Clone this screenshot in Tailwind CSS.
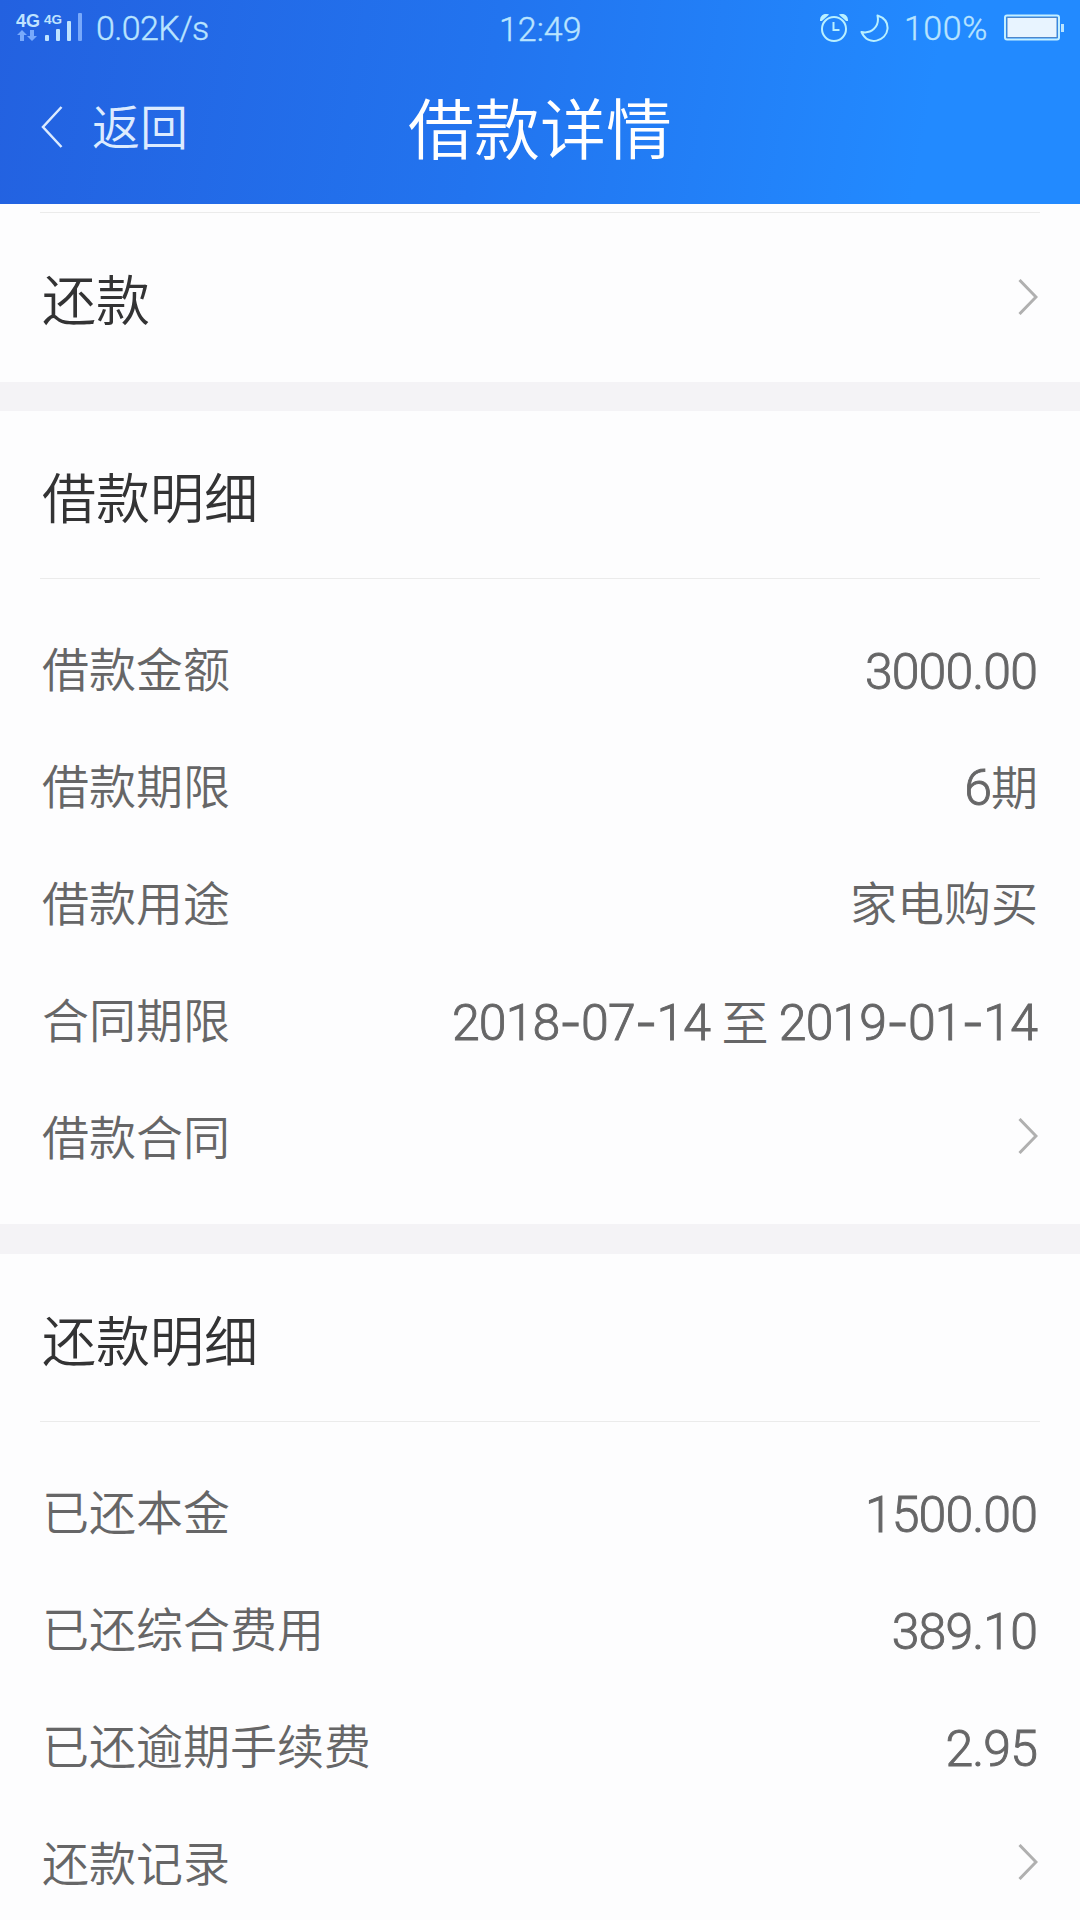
<!DOCTYPE html>
<html lang="zh-CN">
<head>
  <meta charset="UTF-8" />
  <meta name="viewport" content="width=device-width, initial-scale=1.0" />
  <title>借款详情</title>
  <script src="https://cdn.jsdelivr.net/npm/@tailwindcss/browser@4"></script>
</head>
<body class="w-[1080px] h-[1920px] overflow-hidden bg-[#fdfdfe] font-[Roboto,'Noto_Sans_CJK_SC',sans-serif] font-[350] text-[#666667]">

  <!-- Header -->
  <header class="h-[204px] bg-linear-100 from-[#2361e0] via-[#2274ef] via-45% to-[#228aff] to-85%">
    <!-- Status bar -->
    <div class="relative flex h-14 items-center justify-between pl-4 pr-[15px] text-[#b9e4ff] [-webkit-text-stroke:0.4px_currentColor]">
      <div class="flex items-center">
        <svg class="w-[68px] h-8" viewBox="0 0 68 32" fill="#bfe3ff">
          <text x="0" y="15" font-family="Liberation Sans" font-weight="700" font-size="18">4G</text>
          <text x="28" y="12" font-family="Liberation Sans" font-weight="700" font-size="13.5">4G</text>
          <g fill="#78a9fb">
            <path d="M6 18l5 5H8v6H4v-6H1z" />
            <path d="M16 29l5-5h-3v-6h-4v6h-3z" />
            <rect x="62" y="1" width="4" height="28" rx="1" />
          </g>
          <rect x="29" y="23" width="4" height="6" rx="1" />
          <rect x="40" y="17" width="4" height="12" rx="1" />
          <rect x="51" y="9" width="4" height="20" rx="1" />
        </svg>
        <span class="ml-3 text-[34px] leading-14 tracking-[-0.6px]">0.02K/s</span>
      </div>
      <span class="absolute left-[499px] top-px text-[34px] leading-14">12:49</span>
      <div class="flex items-center">
        <svg class="w-7 h-7" viewBox="0 0 28 28" fill="none" stroke="#b9f0ff" stroke-width="2">
          <circle cx="14" cy="15" r="12" />
          <path d="M13.500 8v8h6" />
          <path d="M1 6a5 5 0 0 1 6-5L1.500 6zM27 6a5 5 0 0 0-6-5l5.500 5z" fill="#b9f0ff" />
        </svg>
        <svg class="ml-3 w-[29px] h-[29px]" viewBox="0 0 29 29" fill="none" stroke="#b9f0ff" stroke-width="2" stroke-linejoin="round">
          <path d="M17.500 1.500C25 4 28 9 27.500 15 26.500 27 8 33 1.500 18 11 20 20 13 17.500 1.500z" />
        </svg>
        <span class="ml-[15px] text-[34px] leading-14 tracking-[0.6px]">100%</span>
        <svg class="ml-4 w-[61px] h-7" viewBox="0 0 61 28" fill="none">
          <rect x="1" y="1.500" width="54" height="24" rx="2" stroke="#c5efff" stroke-width="2" />
          <rect x="3" y="3.500" width="50" height="20" fill="#e8f4ff" stroke="#4d86c8" />
          <rect x="57" y="10" width="3" height="8" fill="#b9e4ff" />
        </svg>
      </div>
    </div>

    <!-- Nav bar -->
    <div class="relative flex h-[148px] items-start justify-center">
      <a href="#" class="absolute left-[41px] top-[35px] flex items-center gap-[29px] text-[48px] leading-[68px] text-[#dcebff]">
        <svg class="w-[22px] h-[42px]" viewBox="0 0 22 42" fill="none" stroke="currentColor" stroke-width="2.500">
          <path d="M20.500 1L2 21l18.500 20" />
        </svg>
        <span class="pt-1">返回</span>
      </a>
      <h1 class="mt-[26px] text-[66px] leading-[100px] text-white">借款详情</h1>
    </div>
  </header>

  <main>
    <!-- Repay entry -->
    <section class="h-[178px] px-10 pt-2">
      <div class="border-t border-[#ebebeb]"></div>
      <a href="#" class="flex h-[168px] items-center justify-between px-0.5">
        <span class="pt-[11px] text-[54px] leading-[80px] text-[#333334]">还款</span>
        <svg class="w-5 h-9" viewBox="0 0 20 36" fill="none" stroke="#b0b0b0" stroke-width="3"><path d="M1.500 1L18 18 1.500 35" /></svg>
      </a>
    </section>

    <div class="h-[29px] bg-[#f4f3f6]"></div>

    <!-- Loan details -->
    <section class="px-10">
      <h2 class="flex h-[168px] items-center border-b border-[#ebebeb] px-0.5 pt-3 text-[54px] text-[#333334]">借款明细</h2>
      <dl class="px-0.5 pt-[34px] pb-[26px] text-[47px]">
        <div class="flex h-[117px] items-center justify-between">
          <dt>借款金额</dt>
          <dd class="mr-px pt-0.5 text-[50px] tracking-[-0.9px] [-webkit-text-stroke:0.9px_currentColor]">3000.00</dd>
        </div>
        <div class="flex h-[117px] items-center justify-between">
          <dt>借款期限</dt>
          <dd><span class="text-[50px] tracking-[-0.9px] [-webkit-text-stroke:0.9px_currentColor]">6</span>期</dd>
        </div>
        <div class="flex h-[117px] items-center justify-between">
          <dt>借款用途</dt>
          <dd>家电购买</dd>
        </div>
        <div class="flex h-[117px] items-center justify-between">
          <dt>合同期限</dt>
          <dd class="mr-px text-[50px] tracking-[-0.9px] [-webkit-text-stroke:0.9px_currentColor]">2018<span class="font-[Inter]">-</span>07<span class="font-[Inter]">-</span>14 <span class="text-[47px] [-webkit-text-stroke:0]">至</span> 2019<span class="font-[Inter]">-</span>01<span class="font-[Inter]">-</span>14</dd>
        </div>
        <div class="flex h-[117px] items-center justify-between">
          <dt>借款合同</dt>
          <dd class="pb-2"><svg class="w-5 h-9" viewBox="0 0 20 36" fill="none" stroke="#b0b0b0" stroke-width="3"><path d="M1.500 1L18 18 1.500 35" /></svg></dd>
        </div>
      </dl>
    </section>

    <div class="h-[30px] bg-[#f4f3f6]"></div>

    <!-- Repayment details -->
    <section class="px-10">
      <h2 class="flex h-[168px] items-center border-b border-[#ebebeb] px-0.5 pt-3 text-[54px] text-[#333334]">还款明细</h2>
      <dl class="px-0.5 pt-[34px] text-[47px]">
        <div class="flex h-[117px] items-center justify-between">
          <dt>已还本金</dt>
          <dd class="mr-px pt-0.5 text-[50px] tracking-[-0.9px] [-webkit-text-stroke:0.9px_currentColor]">1500.00</dd>
        </div>
        <div class="flex h-[117px] items-center justify-between">
          <dt>已还综合费用</dt>
          <dd class="mr-px pt-0.5 text-[50px] tracking-[-0.9px] [-webkit-text-stroke:0.9px_currentColor]">389.10</dd>
        </div>
        <div class="flex h-[117px] items-center justify-between">
          <dt>已还逾期手续费</dt>
          <dd class="mr-px pt-0.5 text-[50px] tracking-[-0.9px] [-webkit-text-stroke:0.9px_currentColor]">2.95</dd>
        </div>
        <div class="flex h-[117px] items-center justify-between">
          <dt>还款记录</dt>
          <dd class="pb-2"><svg class="w-5 h-9" viewBox="0 0 20 36" fill="none" stroke="#b0b0b0" stroke-width="3"><path d="M1.500 1L18 18 1.500 35" /></svg></dd>
        </div>
      </dl>
    </section>
  </main>
</body>
</html>
